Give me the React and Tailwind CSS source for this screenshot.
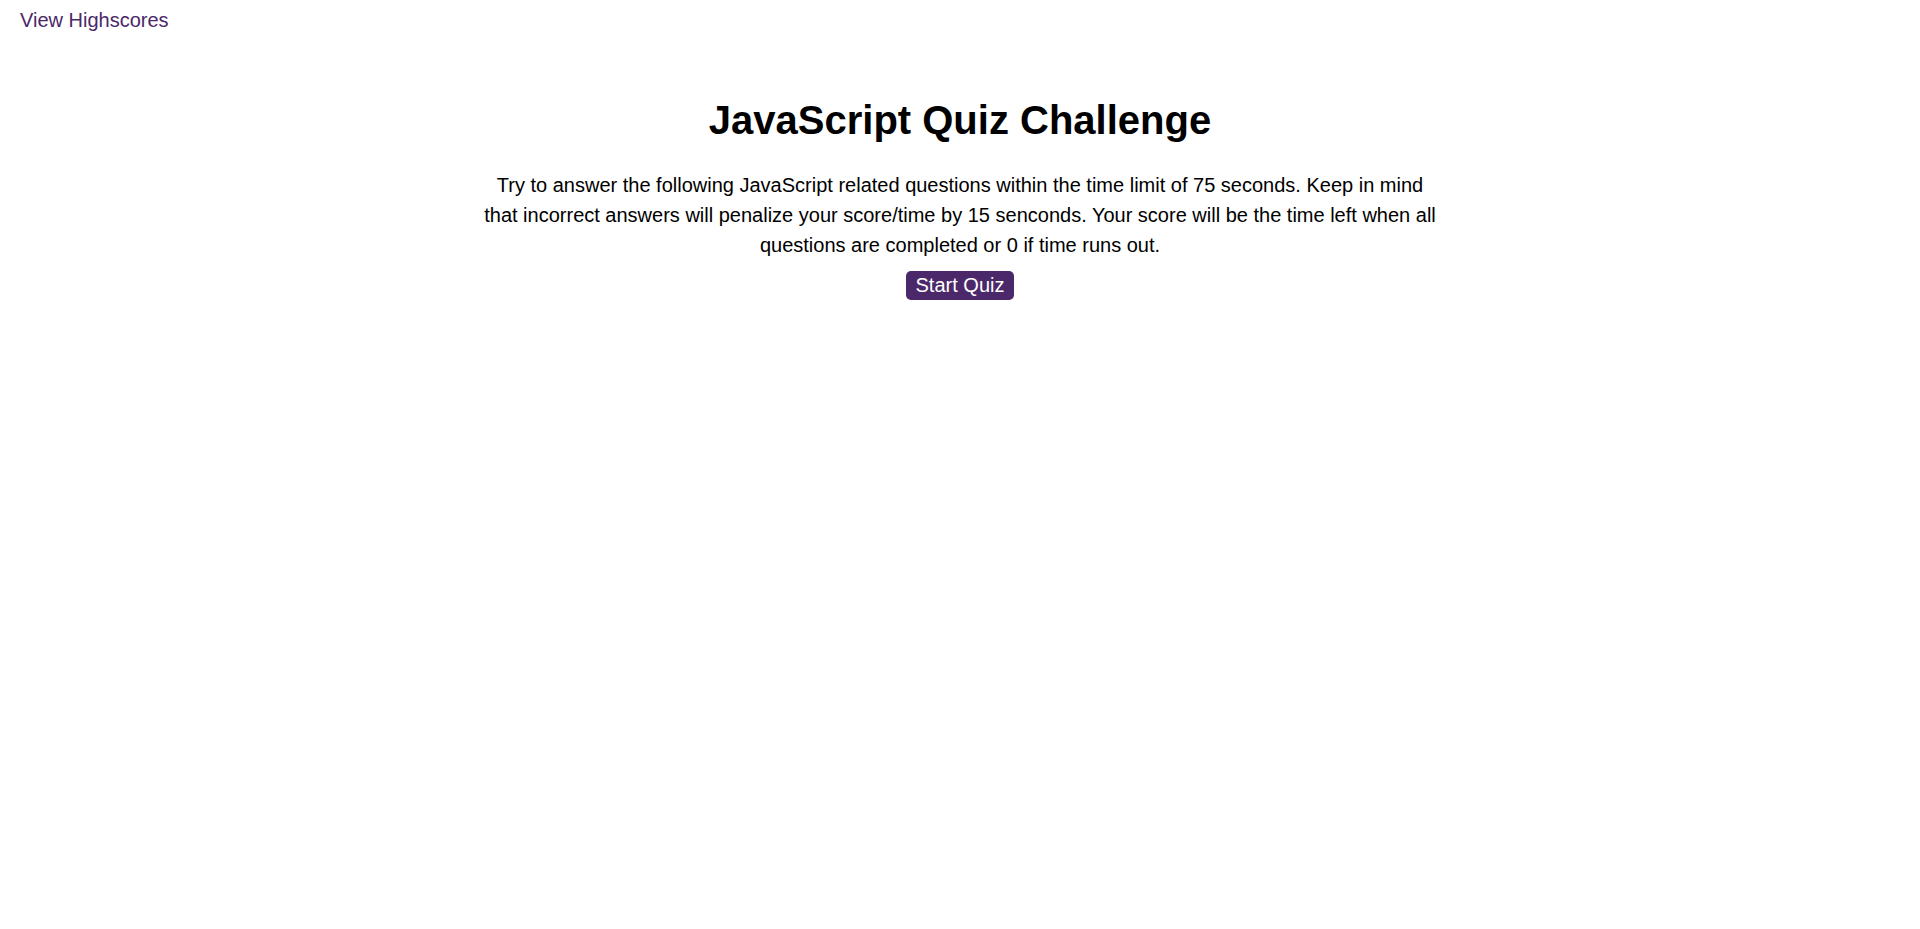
import React from 'react';

const App = () => {
  return (
    <div className="min-h-screen bg-white font-['Liberation_Sans',Arial,sans-serif] text-black">
      <header className="px-5 pt-[9px]">
        <a href="#" className="text-[20px] leading-[23px] text-[#4b2869]">
          View Highscores
        </a>
      </header>

      <main className="mx-auto flex w-[960px] flex-col items-center text-center">
        <h1 className="mt-[63px] text-[40px] font-bold leading-[46px]">JavaScript Quiz Challenge</h1>
        <p className="mt-[27px] text-[20px] leading-[30px]">
          Try to answer the following JavaScript related questions within the time limit of 75 seconds. Keep in mind
          that incorrect answers will penalize your score/time by 15 senconds. Your score will be the time left when all
          questions are completed or 0 if time runs out.
        </p>
        <button className="mt-[11px] rounded-[5px] bg-[#4b2869] px-[10px] py-[3px] text-[20px] leading-[23px] text-white">
          Start Quiz
        </button>
      </main>
    </div>
  );
};

export default App;
